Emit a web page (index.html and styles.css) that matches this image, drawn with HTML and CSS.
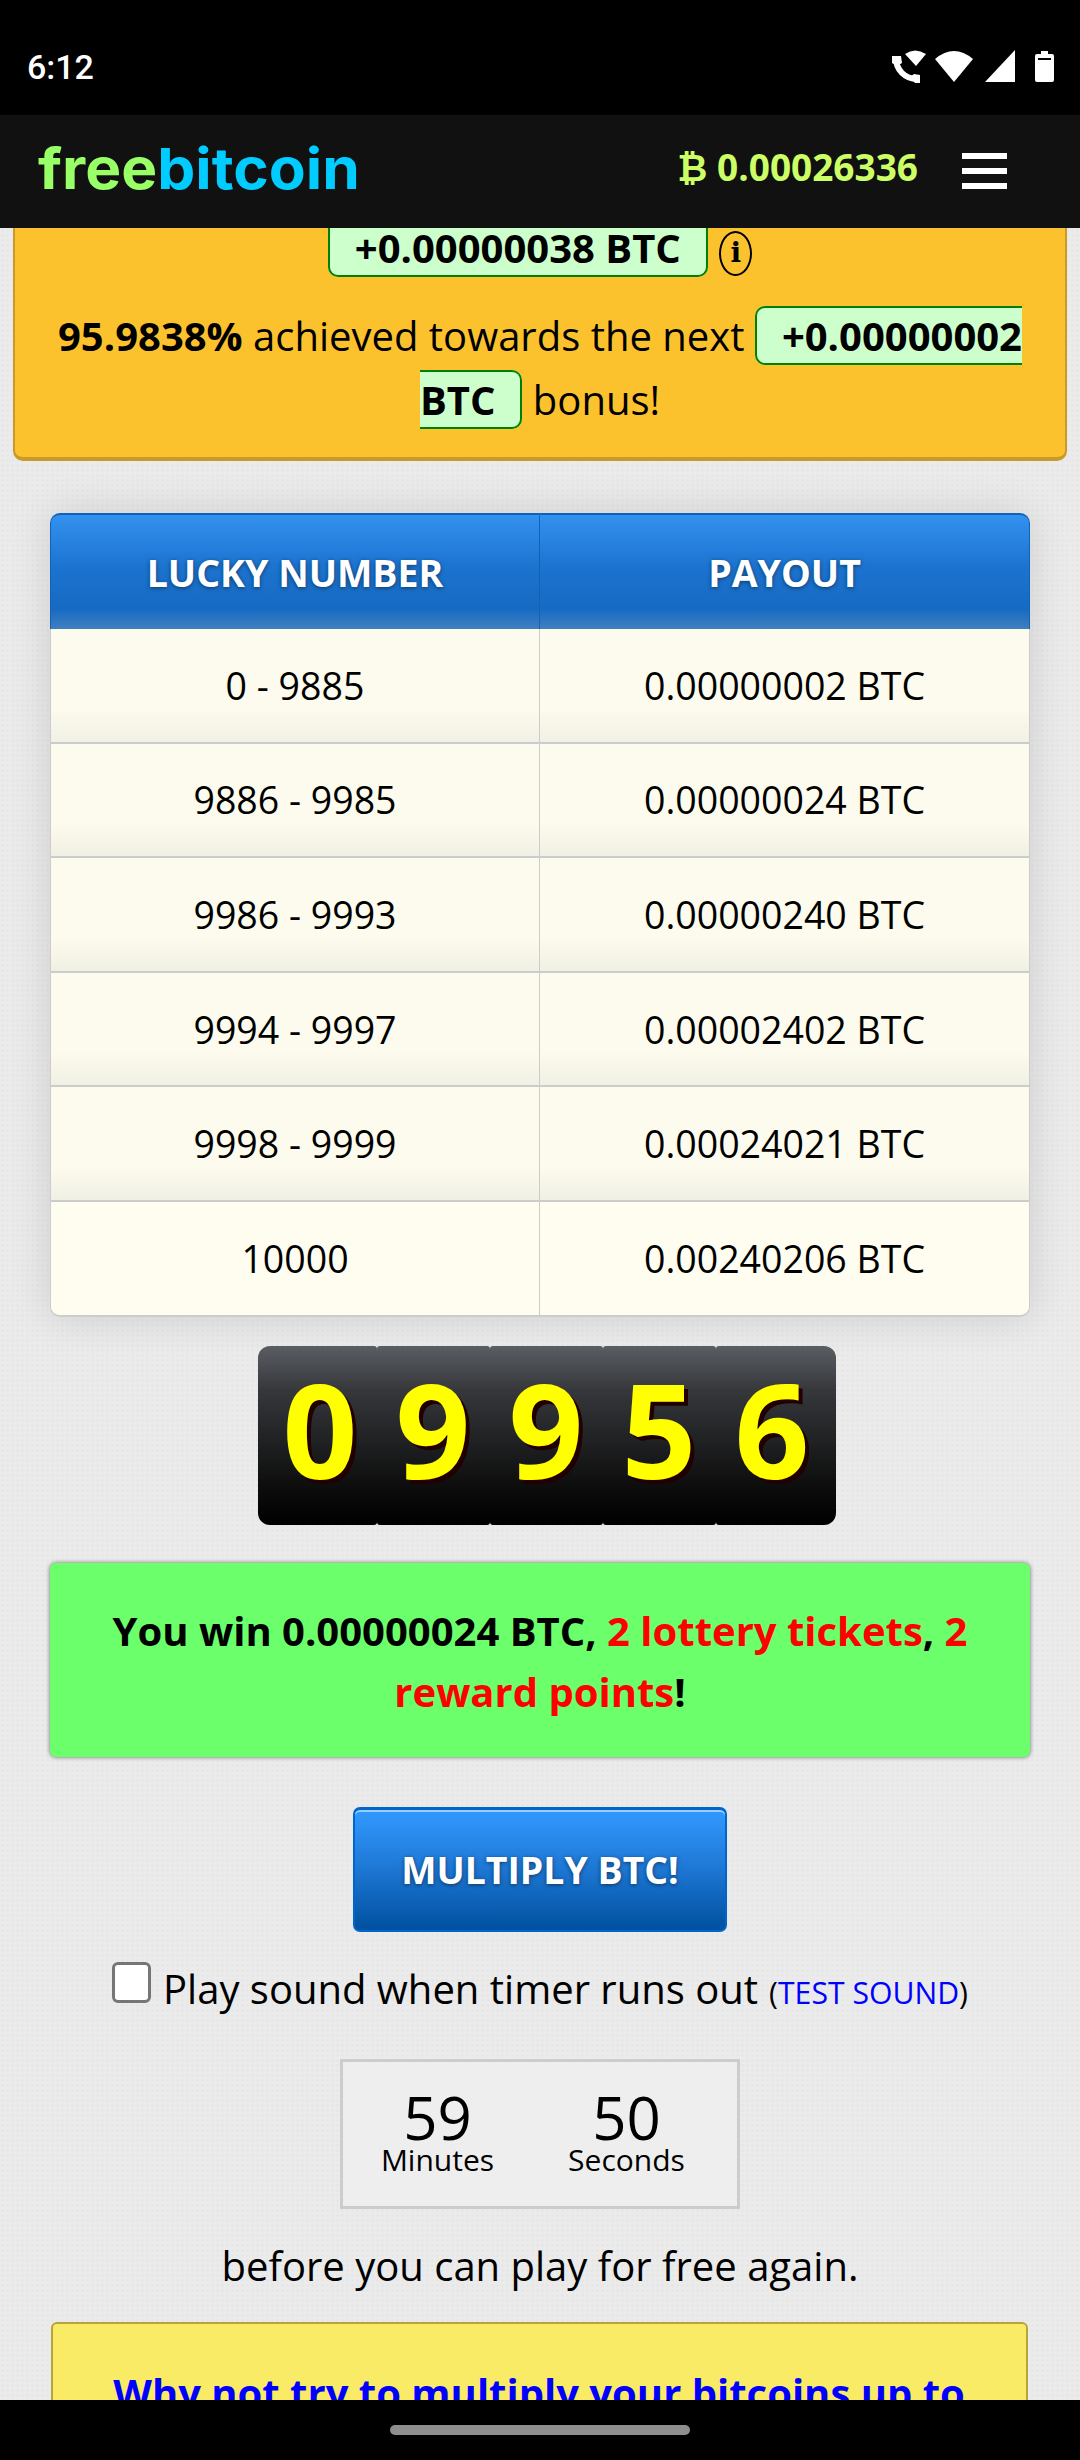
FILE: index.html
```html
<!DOCTYPE html>
<html lang="en">

<head>
    <meta charset="UTF-8">
    <title>freebitcoin</title>
    <link rel="stylesheet" href="styles.css">
</head>

<body>
    <div class="status">
        <span class="clock">6:12</span>
        <svg class="status-icons" width="220" height="60" viewBox="0 0 220 60" fill="#fff">
            <path d="M45 24Q55 17 66 24L56 36Z"/>
            <path d="M36 28C36 40 45 49 57 49" fill="none" stroke="#fff" stroke-width="6"/>
            <path d="M32 26h9l1 7-5 3-5-3zM50 47l4-3 6 1v8h-5z"/>
            <path d="M75 29Q94 13 113 29L94 52Z"/>
            <path d="M125 52L155 20V52Z"/>
            <path d="M181 21h7v3h4a2 2 0 0 1 2 2v24a2 2 0 0 1-2 2h-15a2 2 0 0 1-2-2V26a2 2 0 0 1 2-2h4z"/>
            <rect x="178" y="28" width="13" height="2" fill="#000"/>
        </svg>
    </div>

    <header class="topbar">
        <div class="logo"><span class="logo-free">free</span><span class="logo-bitcoin">bitcoin</span></div>
        <div class="balance"><span class="btc-sign">₿</span> 0.00026336</div>
        <div class="burger"><span></span><span></span><span></span></div>
    </header>

    <main class="page">
        <div class="bonus">
            <p class="bonus-line"><span class="pill">+0.00000038 BTC</span> <span class="info">i</span></p>
            <p class="bonus-progress"><b>95.9838%</b> achieved towards the next <span class="pill">+0.00000002 BTC</span> bonus!</p>
        </div>

        <table class="payouts">
            <tr><th>LUCKY NUMBER</th><th>PAYOUT</th></tr>
            <tr><td>0 - 9885</td><td>0.00000002 BTC</td></tr>
            <tr><td>9886 - 9985</td><td>0.00000024 BTC</td></tr>
            <tr><td>9986 - 9993</td><td>0.00000240 BTC</td></tr>
            <tr><td>9994 - 9997</td><td>0.00002402 BTC</td></tr>
            <tr><td>9998 - 9999</td><td>0.00024021 BTC</td></tr>
            <tr><td>10000</td><td>0.00240206 BTC</td></tr>
        </table>

        <div class="digits">
            <div class="digit">0</div>
            <div class="digit">9</div>
            <div class="digit">9</div>
            <div class="digit">5</div>
            <div class="digit">6</div>
        </div>

        <div class="win">You win 0.00000024 BTC, <span class="red">2 lottery tickets</span>, <span class="red">2 reward points</span>!</div>

        <button class="multiply">MULTIPLY BTC!</button>

        <div class="sound">
            <input type="checkbox" class="sound-check">
            <span>Play sound when timer runs out</span>
            <span class="test">(<a href="#">TEST SOUND</a>)</span>
        </div>

        <div class="timer">
            <div class="timer-part"><span class="timer-num">59</span><span class="timer-label">Minutes</span></div>
            <div class="timer-part"><span class="timer-num">50</span><span class="timer-label">Seconds</span></div>
        </div>

        <p class="again">before you can play for free again.</p>

        <div class="promo"><a href="#">Why not try to multiply your bitcoins up to 4750x?</a></div>
    </main>

    <div class="navbar"><span class="nav-pill"></span></div>
</body>

</html>
```

FILE: styles.css
```css
* {
    box-sizing: border-box;
}

html,
body {
    margin: 0;
    height: 2460px;
}

body {
    display: flex;
    flex-direction: column;
    overflow: hidden;
    font-family: "Open Sans", "DejaVu Sans", sans-serif;
    font-size: 40px;
    color: #000;
    background-color: #ebebeb;
}

/* android bars */
.status {
    height: 115px;
    flex: none;
    display: flex;
    justify-content: space-between;
    align-items: flex-start;
    background: #000;
}

.clock {
    margin: 47px 0 0 27px;
    font-family: Roboto, sans-serif;
    font-weight: 500;
    font-size: 34px;
    line-height: 40px;
    color: #fff;
}

.status-icons {
    margin-top: 30px;
}

.navbar {
    height: 60px;
    flex: none;
    display: flex;
    justify-content: center;
    padding-top: 25px;
    background: #000;
}

.nav-pill {
    width: 300px;
    height: 10px;
    border-radius: 5px;
    background: #8e8e8e;
}

/* header */
.topbar {
    height: 113px;
    flex: none;
    display: flex;
    align-items: center;
    padding: 0 73px 0 38px;
    background: #111;
}

.logo {
    font-family: Inter, sans-serif;
    font-weight: 700;
    font-size: 57px;
    line-height: 60px;
    margin-top: -6px;
    transform: scaleX(1.06);
    transform-origin: left center;
}

.logo-free {
    color: #99ff66;
}

.logo-bitcoin {
    color: #00ccff;
}

.balance {
    margin-left: auto;
    font-weight: 700;
    font-size: 37px;
    color: #ccff66;
    margin-top: -10px;
}

.burger {
    margin-left: 44px;
    width: 45px;
    display: flex;
    flex-direction: column;
    gap: 9px;
    margin-top: -2px;
}

.burger span {
    height: 6px;
    background: #fff;
}

/* page */
.page {
    flex: 1;
    overflow: hidden;
    display: flex;
    flex-direction: column;
    align-items: center;
    background-color: #ebebeb;
    background-image: radial-gradient(rgba(0, 0, 0, .018) 1px, transparent 1.5px);
    background-size: 5px 5px;
}

.bonus {
    width: 1054px;
    margin-top: -26px;
    padding: 0 38px 25px;
    text-align: center;
    background: #fcc22e;
    border: 2px solid #c9992a;
    border-bottom-width: 4px;
    border-radius: 0 0 10px 10px;
}

.bonus-line {
    margin: 0 0 24px;
    line-height: 64px;
    padding-top: 12px;
}

.bonus-progress {
    margin: 0;
    line-height: 64px;
}

.pill {
    padding: 0 25px;
    font-weight: 700;
    background: #ccffcc;
    border: 2px solid #008000;
    border-radius: 10px;
}

.info {
    display: inline-block;
    width: 33px;
    height: 45px;
    margin-left: 1px;
    border: 2px solid #000;
    border-radius: 50%;
    font-family: "DejaVu Serif", serif;
    font-weight: 700;
    font-size: 28px;
    line-height: 39px;
    vertical-align: 1px;
}

.payouts {
    width: 980px;
    margin-top: 52px;
    flex: none;
    table-layout: fixed;
    border-collapse: separate;
    border-spacing: 0;
    font-size: 37.5px;
    text-align: center;
    border-radius: 10px;
    box-shadow: 0 0 40px rgba(0, 0, 0, .13);
}

.payouts th {
    height: 116px;
    font-weight: 700;
    color: #fff;
    text-shadow: 0 1px 4px rgba(0, 0, 0, .5);
    background: linear-gradient(#3391f0, #1c74d0 45%, #166ac2 82%, #4080c0);
    border-top: 2px solid #0f62b8;
    border-right: 1px solid #1560b0;
}

.payouts th:first-child {
    border-left: 1px solid #0f62b8;
    border-top-left-radius: 10px;
}

.payouts th:last-child {
    border-right: 1px solid #0f62b8;
    border-top-right-radius: 10px;
}

.payouts td {
    height: 114.6px;
    padding: 0;
    background: linear-gradient(#fcfbed 70%, #f1f0e4);
    border-right: 1px solid #ccc;
    border-bottom: 2px solid #ccc;
}

.payouts td:first-child {
    border-left: 1px solid #ccc;
}

.payouts tr:last-child td {
    background: #fffdf0;
}

.payouts tr:last-child td:first-child {
    border-bottom-left-radius: 10px;
}

.payouts tr:last-child td:last-child {
    border-bottom-right-radius: 10px;
}

.digits {
    display: flex;
    flex: none;
    margin: 29px 0 0 13px;
}

.digit {
    width: 113px;
    height: 179px;
    font-weight: 700;
    font-size: 131px;
    line-height: 165px;
    text-align: center;
    color: #ff0;
    text-shadow: 4px 4px 0 #200;
    background: linear-gradient(#5a5d62, #35373b 25%, #0c0c0c 80%, #000);
    border-radius: 3px;
}

.digit:first-child {
    width: 119px;
    padding-left: 6px;
    border-radius: 12px 3px 3px 12px;
}

.digit:last-child {
    width: 120px;
    padding-right: 7px;
    border-radius: 3px 12px 12px 3px;
}

.win {
    width: 980px;
    flex: none;
    margin-top: 38px;
    padding: 37px 30px 35px;
    text-align: center;
    font-weight: 700;
    line-height: 61px;
    background: #6bff6b;
    border-radius: 6px;
    box-shadow: 0 0 4px rgba(0, 0, 0, .55);
}

.red {
    color: #f00;
}

.multiply {
    display: block;
    flex: none;
    width: 374px;
    height: 125px;
    margin-top: 50px;
    font-family: inherit;
    font-weight: 700;
    font-size: 37.4px;
    color: #fff;
    text-shadow: 0 1px 4px rgba(0, 0, 0, .5);
    background: linear-gradient(#3399ff, #1f7ad8 45%, #00509f);
    border: 2px solid #0066cc;
    border-top-width: 3px;
    border-radius: 7px;
    box-shadow: inset 0 2px 0 #99ccff;
}

.sound {
    display: flex;
    flex: none;
    align-items: center;
    margin-top: 28px;
    height: 58px;
    white-space: pre;
}

.sound-check {
    appearance: none;
    width: 39px;
    height: 41px;
    margin: 0 12px 12px 0;
    background: #fff;
    border: 3px solid #767676;
    border-radius: 6px;
}

.test {
    margin-left: 11px;
    font-size: 30.2px;
    padding-top: 8px;
}

.test a {
    color: #00f;
    text-decoration: none;
}

.timer {
    width: 400px;
    height: 150px;
    flex: none;
    margin-top: 41px;
    padding: 30px 16px 0 0;
    display: flex;
    justify-content: center;
    background: #eee;
    border: 3px solid #ccc;
}

.timer-part {
    width: 190px;
    display: flex;
    flex-direction: column;
    align-items: center;
}

.timer-num {
    font-size: 60px;
    line-height: 50px;
}

.timer-label {
    font-size: 30px;
    line-height: 36px;
}

.again {
    flex: none;
    margin: 30px 0 0;
    line-height: 54px;
}

.promo {
    width: 977px;
    height: 200px;
    flex: none;
    margin: 29px 2px 0 0;
    padding: 41px 30px 0;
    text-align: center;
    font-weight: 700;
    background: #faeb66;
    border: 2px solid #b5a53b;
    border-radius: 6px;
}

.promo a {
    color: #00f;
    text-decoration: none;
}
```
